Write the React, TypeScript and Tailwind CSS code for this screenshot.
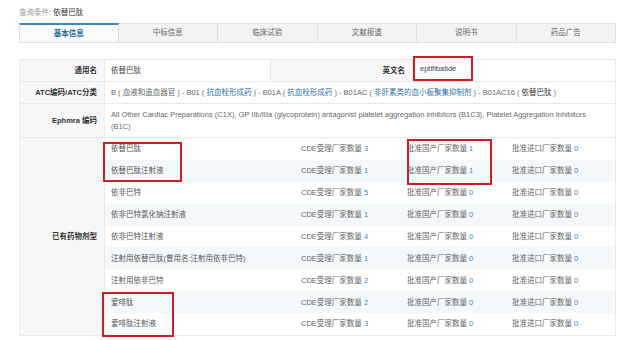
const tabs = ["基本信息", "中标信息", "临床试验", "文献报道", "说明书", "药品广告"];

interface Form {
  name: string;
  cde: number;
  domestic: number;
  imported: number;
}

const forms: Form[] = [
  { name: "依替巴肽", cde: 3, domestic: 1, imported: 0 },
  { name: "依替巴肽注射液", cde: 1, domestic: 1, imported: 0 },
  { name: "依非巴特", cde: 5, domestic: 0, imported: 0 },
  { name: "依非巴特氯化钠注射液", cde: 1, domestic: 0, imported: 0 },
  { name: "依非巴特注射液", cde: 4, domestic: 0, imported: 0 },
  { name: "注射用依替巴肽(曾用名:注射用依非巴特)", cde: 1, domestic: 0, imported: 0 },
  { name: "注射用依非巴特", cde: 2, domestic: 0, imported: 0 },
  { name: "爱啡肽", cde: 2, domestic: 0, imported: 0 },
  { name: "爱啡肽注射液", cde: 3, domestic: 0, imported: 0 },
];

function Label({ children, className = "" }: { children: React.ReactNode; className?: string }) {
  return (
    <div
      className={`w-[85px] shrink-0 bg-[#f7f7f7] border-r border-[#e8e8e8] flex items-center justify-end pr-[7px] font-bold text-[#333] ${className}`}
    >
      {children}
    </div>
  );
}

export default function App() {
  return (
    <div className="relative w-[640px] h-[340px] overflow-hidden bg-white px-[19px] font-['Liberation_Sans','Noto_Sans_CJK_SC',sans-serif] text-[7.5px] text-[#666]">
      <div className="h-[23px] pt-[8px] leading-[9px]">
        <span className="text-[#999]">查询条件: </span>
        <span className="text-[#333]">依替巴肽</span>
      </div>

      <div className="flex h-[20px] w-[597px]">
        {tabs.map((t, i) => (
          <div
            key={t}
            className={`w-[99.5px] flex items-center justify-center border-b border-r border-[#dedede] ${
              i === 0
                ? "bg-[#f9fafa] border-t-2 border-t-[#3a87b8] border-l text-[#2a6a96] font-bold"
                : "bg-[#f3f3f3] border-t border-t-[#e2e2e2]"
            }`}
          >
            {t}
          </div>
        ))}
      </div>

      <div className="mt-[16px] w-[597px] border border-[#e8e8e8]">
        <div className="flex h-[22px] border-b border-[#e8e8e8]">
          <Label>通用名</Label>
          <div className="w-[166px] flex items-center pl-[6px] border-r border-[#e8e8e8] text-[#444]">依替巴肽</div>
          <Label className="w-[142px]">英文名</Label>
          <div className="flex-1 flex items-center">
            <span className="relative -top-[2px] border-2 border-[#cc1f24] h-[25px] w-[60px] flex items-center pl-[5px] text-[#444]">
              eptifibatide
            </span>
          </div>
        </div>

        <div className="flex h-[22px] border-b border-[#e8e8e8]">
          <Label>ATC编码/ATC分类</Label>
          <div className="flex-1 flex items-center pl-[6px] whitespace-pre">
            {"B ( 血液和造血器官 ) - B01 ( "}
            <span className="text-[#2f6fa3]">抗血栓形成药</span>
            {" ) - B01A ( "}
            <span className="text-[#2f6fa3]">抗血栓形成药</span>
            {" ) - B01AC ( "}
            <span className="text-[#2f6fa3]">非肝素类的血小板聚集抑制剂</span>
            {" ) - B01AC16 ( "}
            <span className="text-[#333]">依替巴肽</span>
            {" )"}
          </div>
        </div>

        <div className="flex h-[34px] border-b border-[#e8e8e8]">
          <Label>Ephmra 编码</Label>
          <div className="flex-1 flex items-center pl-[6px] pr-[20px] leading-[12px]">
            All Other Cardiac Preparations (C1X), GP IIb/IIIa (glycoprotein) antagonist platelet aggregation inhibitors
            (B1C3), Platelet Aggregation Inhibitors (B1C)
          </div>
        </div>

        <div className="flex">
          <Label>已有药物剂型</Label>
          <div className="flex-1">
            {forms.map((f, i) => (
              <div
                key={f.name}
                className={`flex h-[21.9px] items-center ${i % 2 === 1 ? "bg-[#f3f8fb]" : "bg-white"}`}
              >
                <div className="w-[196px] pl-[6px] text-[#555]">{f.name}</div>
                <div className="w-[106px]">
                  CDE受理厂家数量 <span className="text-[#3f86b5]">{f.cde}</span>
                </div>
                <div className="w-[105px]">
                  批准国产厂家数量 <span className="text-[#3f86b5]">{f.domestic}</span>
                </div>
                <div className="flex-1">
                  批准进口厂家数量 <span className="text-[#3f86b5]">{f.imported}</span>
                </div>
              </div>
            ))}
          </div>
        </div>
      </div>

      {/* highlight boxes drawn over the table */}
      <div className="absolute left-[103px] top-[142px] w-[79px] h-[40px] border-2 border-[#cc1f24]" />
      <div className="absolute left-[407px] top-[139px] w-[85px] h-[46px] border-2 border-[#cc1f24]" />
      <div className="absolute left-[102px] top-[292px] w-[72px] h-[45px] border-2 border-[#cc1f24]" />
    </div>
  );
}
